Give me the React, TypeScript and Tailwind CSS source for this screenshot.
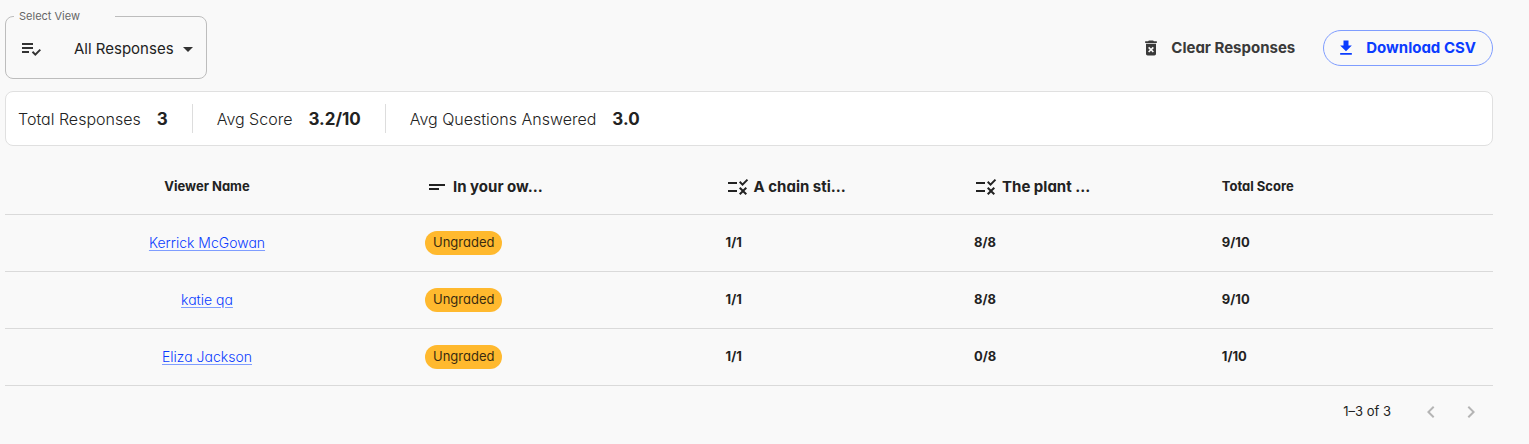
import {
  MdArrowDropDown,
  MdChevronLeft,
  MdChevronRight,
  MdDeleteForever,
  MdDownload,
  MdPlaylistAddCheck,
  MdRule,
  MdShortText,
} from "react-icons/md";

const stats = [
  { label: "Total Responses", value: "3" },
  { label: "Avg Score", value: "3.2/10" },
  { label: "Avg Questions Answered", value: "3.0" },
];

const questions = [
  { title: "In your ow...", Icon: MdShortText, width: "w-[20.2%]" },
  { title: "A chain sti...", Icon: MdRule, width: "w-[16.7%]" },
  { title: "The plant ...", Icon: MdRule, width: "w-[16.65%]" },
];

const rows = [
  { name: "Kerrick McGowan", chain: "1/1", plant: "8/8", total: "9/10" },
  { name: "katie qa", chain: "1/1", plant: "8/8", total: "9/10" },
  { name: "Eliza Jackson", chain: "1/1", plant: "0/8", total: "1/10" },
];

function ViewSelect() {
  return (
    <fieldset className="rounded-lg border border-[#bdbdbd] pl-2">
      <legend className="w-[101px] pl-[5px] text-[11px] leading-4 text-[#666666]">
        <label htmlFor="view">Select View</label>
      </legend>
      <div className="flex h-[54px] items-center pb-1 pl-[5px]">
        <MdPlaylistAddCheck className="size-6 text-[#333333]" aria-hidden />
        <div className="relative ml-[31px] flex items-center">
          <select
            id="view"
            className="w-[132px] appearance-none bg-transparent pr-8 text-[15px] leading-6 text-[#222222] outline-none"
          >
            <option>All Responses</option>
          </select>
          <MdArrowDropDown
            className="pointer-events-none absolute right-[6px] size-6 text-[#333333]"
            aria-hidden
          />
        </div>
      </div>
    </fieldset>
  );
}

export default function App() {
  return (
    <main className="min-h-screen bg-[#f9f9f9] pt-2 pr-9 pb-3 pl-[5px] font-['Inter',sans-serif] text-[#222222] [font-feature-settings:'cv11']">
      <header className="flex items-start justify-between">
        <ViewSelect />
        <div className="flex items-center gap-4 pt-[22px]">
          <button
            type="button"
            className="flex h-9 items-center gap-2.5 px-3 text-[15px] font-bold text-[#3a3a3a]"
          >
            <MdDeleteForever className="size-5" aria-hidden />
            Clear Responses
          </button>
          <button
            type="button"
            className="flex h-9 items-center gap-2.5 rounded-full border border-[#7f9dff] pr-4 pl-3 text-[15px] font-bold text-[#0a3cff]"
          >
            <MdDownload className="size-5" aria-hidden />
            Download CSV
          </button>
        </div>
      </header>

      <dl className="mt-3 flex items-center divide-x divide-[#dddddd] rounded-lg border border-[#e0e0e0] bg-white py-3">
        {stats.map((stat) => (
          <div key={stat.label} className="flex h-[29px] items-center gap-4 pr-6 pl-6 first:pl-3">
            <dt className="text-base font-light">{stat.label}</dt>
            <dd className="text-[17px] leading-6 font-bold">{stat.value}</dd>
          </div>
        ))}
      </dl>

      <table className="mt-3 w-full table-fixed border-collapse text-left text-[13px]">
        <thead>
          <tr className="h-14 border-b border-[#dadada]">
            <th scope="col" className="w-[27.15%] pt-0.5 text-center font-bold">
              Viewer Name
            </th>
            {questions.map(({ title, Icon, width }) => (
              <th key={title} scope="col" className={`${width} px-4 pt-0.5 font-bold`}>
                <span className="flex items-center gap-1 text-[15px] leading-6">
                  <Icon className="size-6" aria-hidden />
                  {title}
                </span>
              </th>
            ))}
            <th scope="col" className="px-4 pt-0.5 font-bold">
              Total Score
            </th>
          </tr>
        </thead>
        <tbody>
          {rows.map((row) => (
            <tr key={row.name} className="h-[57px] border-b border-[#dadada]">
              <td className="text-center text-sm">
                <a href="#" className="font-light text-[#0a3cff] underline decoration-[#7f9dff] underline-offset-2">
                  {row.name}
                </a>
              </td>
              <td className="px-4">
                <span className="inline-flex h-6 items-center rounded-full bg-[#ffb92e] px-2 align-middle text-[13px] text-[#3a2c10]">
                  Ungraded
                </span>
              </td>
              <td className="px-4 font-bold">{row.chain}</td>
              <td className="px-4 font-bold">{row.plant}</td>
              <td className="px-4 font-bold">{row.total}</td>
            </tr>
          ))}
        </tbody>
      </table>

      <nav aria-label="Pagination" className="flex h-[52px] items-center justify-end pr-[2px]">
        <span className="mr-5 text-[13px]">1–3 of 3</span>
        <button type="button" disabled aria-label="Previous page" className="flex size-10 items-center justify-center text-[#b5b5b5]">
          <MdChevronLeft className="size-6" aria-hidden />
        </button>
        <button type="button" disabled aria-label="Next page" className="flex size-10 items-center justify-center text-[#b5b5b5]">
          <MdChevronRight className="size-6" aria-hidden />
        </button>
      </nav>
    </main>
  );
}
